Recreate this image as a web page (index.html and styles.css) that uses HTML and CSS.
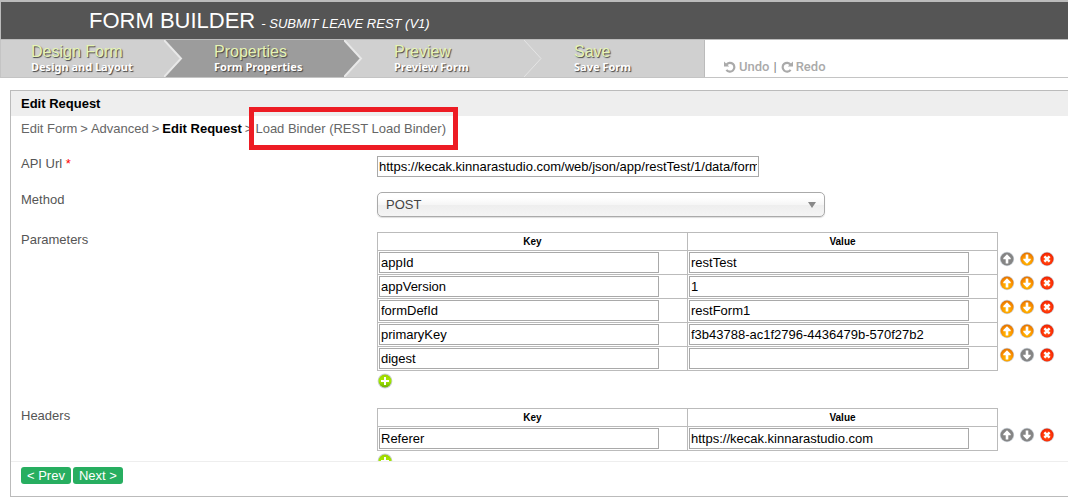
FILE: index.html
```html
<!DOCTYPE html>
<html lang="en">
<head>
<meta charset="utf-8">
<title>Form Builder - Submit Leave Rest (V1)</title>
<link rel="stylesheet" href="styles.css">
</head>
<body>
<svg class="defs" aria-hidden="true">
  <defs>
    <radialGradient id="orange" cx="50%" cy="70%" r="75%"><stop offset="0" stop-color="#ffc400"/><stop offset=".55" stop-color="#fb9200"/><stop offset="1" stop-color="#dd6a00"/></radialGradient>
    <radialGradient id="red" cx="50%" cy="55%" r="60%"><stop offset="0" stop-color="#ff7a2a"/><stop offset=".6" stop-color="#ff3408"/><stop offset="1" stop-color="#e01c00"/></radialGradient>
    <linearGradient id="green" x1="0" y1="0" x2="0" y2="1"><stop offset="0" stop-color="#9fd400"/><stop offset=".5" stop-color="#a4ea00"/><stop offset="1" stop-color="#6fae00"/></linearGradient>
    <symbol id="up" viewBox="0 0 16 16"><circle cx="8" cy="8" r="7.2" fill="#cfd6dd"/><circle cx="8" cy="8" r="6.5"/><path d="M8 3.2 4.3 7v1.2h2.4v4.3h2.6V8.2h2.4V7z" fill="#fff"/></symbol>
    <symbol id="down" viewBox="0 0 16 16"><circle cx="8" cy="8" r="7.2" fill="#cfd6dd"/><circle cx="8" cy="8" r="6.5"/><path d="M8 12.8 4.3 9V7.8h2.4V3.5h2.6v4.3h2.4V9z" fill="#fff"/></symbol>
    <symbol id="del" viewBox="0 0 16 16"><circle cx="8" cy="8" r="7.2" fill="#cfd6dd"/><circle cx="8" cy="8" r="6.5" fill="url(#red)"/><path d="M5.4 5.4l5.2 5.2M10.6 5.400l-5.2 5.2" stroke="#fff" stroke-width="2.4"/></symbol>
    <symbol id="add" viewBox="0 0 16 16"><circle cx="8" cy="8" r="7.4" fill="#ccd2d8"/><circle cx="8" cy="8" r="6.5" fill="url(#green)"/><path d="M8 4v8M4 8h8" stroke="#fff" stroke-width="2"/></symbol>
  </defs>
</svg>

<header class="top"><h1>FORM BUILDER <small>- SUBMIT LEAVE REST (V1)</small></h1></header>

<div class="toolbar">
  <nav class="steps">
    <a class="step" href="#design"><span class="name">Design Form</span><span class="desc">Design and Layout</span>
      <svg class="chevron to-dark" viewBox="0 0 19 37"><path class="next" d="M0 0H19V37H0z"/><path class="prev" d="M0 0 17 18.5 0 37z"/><path class="edge" d="M0 0 17 18.5 0 37"/></svg></a>
    <a class="step active" href="#properties"><span class="name">Properties</span><span class="desc">Form Properties</span>
      <svg class="chevron to-light" viewBox="0 0 19 37"><path class="next" d="M0 0H19V37H0z"/><path class="prev" d="M0 0 17 18.5 0 37z"/><path class="edge" d="M0 0 17 18.5 0 37"/></svg></a>
    <a class="step" href="#preview"><span class="name">Preview</span><span class="desc">Preview Form</span>
      <svg class="chevron plain" viewBox="0 0 19 37"><path class="edge" d="M0 0 17 18.5 0 37"/></svg></a>
    <a class="step last" href="#save"><span class="name">Save</span><span class="desc">Save Form</span></a>
  </nav>
  <div class="history">
    <button type="button"><svg viewBox="0 0 12 12"><path d="M2.4 3.6A4.4 4.4 0 1 1 2.4 8.8" fill="none" stroke="currentColor" stroke-width="2.2"/><path d="M0 .4V5.6H5.2z" fill="currentColor"/></svg>Undo</button>
    <span class="bar">|</span>
    <button type="button"><svg viewBox="0 0 12 12"><path d="M9.6 3.6A4.4 4.4 0 1 0 9.6 8.8" fill="none" stroke="currentColor" stroke-width="2.2"/><path d="M12 .4V5.6H6.8z" fill="currentColor"/></svg>Redo</button>
  </div>
</div>

<main class="panel">
  <h2>Edit Request</h2>
  <nav class="crumbs"><a href="#form">Edit Form</a><span>&gt;</span><a href="#advanced">Advanced</a><span>&gt;</span><strong>Edit Request</strong><span>&gt;</span><a class="marked" href="#binder">Load Binder (REST Load Binder)</a></nav>

  <form class="fields" id="fields">
    <div class="field url">
      <label for="api-url">API Url <span class="required">*</span></label>
      <div><input class="wide" id="api-url" type="text" value="https://kecak.kinnarastudio.com/web/json/app/restTest/1/data/form/restForm1"></div>
    </div>
    <div class="field method">
      <label for="method">Method</label>
      <div class="select"><select id="method"><option>POST</option><option>GET</option></select></div>
    </div>
    <div class="field">
      <span class="label" id="parameters">Parameters</span>
      <div>
        <table aria-labelledby="parameters">
          <thead><tr><th>Key</th><th>Value</th></tr></thead>
          <tbody>
            <tr><td><input type="text" aria-label="Key 1" value="appId"></td><td><input type="text" aria-label="Value 1" value="restTest"></td>
              <td class="actions"><div><button type="button" aria-label="Move up" class="off"><svg><use href="#up"/></svg></button><button type="button" aria-label="Move down"><svg><use href="#down"/></svg></button><button type="button" aria-label="Delete"><svg><use href="#del"/></svg></button></div></td></tr>
            <tr><td><input type="text" aria-label="Key 2" value="appVersion"></td><td><input type="text" aria-label="Value 2" value="1"></td>
              <td class="actions"><div><button type="button" aria-label="Move up"><svg><use href="#up"/></svg></button><button type="button" aria-label="Move down"><svg><use href="#down"/></svg></button><button type="button" aria-label="Delete"><svg><use href="#del"/></svg></button></div></td></tr>
            <tr><td><input type="text" aria-label="Key 3" value="formDefId"></td><td><input type="text" aria-label="Value 3" value="restForm1"></td>
              <td class="actions"><div><button type="button" aria-label="Move up"><svg><use href="#up"/></svg></button><button type="button" aria-label="Move down"><svg><use href="#down"/></svg></button><button type="button" aria-label="Delete"><svg><use href="#del"/></svg></button></div></td></tr>
            <tr><td><input type="text" aria-label="Key 4" value="primaryKey"></td><td><input type="text" aria-label="Value 4" value="f3b43788-ac1f2796-4436479b-570f27b2"></td>
              <td class="actions"><div><button type="button" aria-label="Move up"><svg><use href="#up"/></svg></button><button type="button" aria-label="Move down"><svg><use href="#down"/></svg></button><button type="button" aria-label="Delete"><svg><use href="#del"/></svg></button></div></td></tr>
            <tr><td><input type="text" aria-label="Key 5" value="digest"></td><td><input type="text" aria-label="Value 5" value=""></td>
              <td class="actions"><div><button type="button" aria-label="Move up"><svg><use href="#up"/></svg></button><button type="button" aria-label="Move down" class="off"><svg><use href="#down"/></svg></button><button type="button" aria-label="Delete"><svg><use href="#del"/></svg></button></div></td></tr>
          </tbody>
        </table>
        <button class="add" type="button" aria-label="Add parameter"><svg><use href="#add"/></svg></button>
      </div>
    </div>
    <div class="field">
      <span class="label" id="headers">Headers</span>
      <div>
        <table aria-labelledby="headers">
          <thead><tr><th>Key</th><th>Value</th></tr></thead>
          <tbody>
            <tr><td><input type="text" aria-label="Header key" value="Referer"></td><td><input type="text" aria-label="Header value" value="https://kecak.kinnarastudio.com"></td>
              <td class="actions"><div><button type="button" aria-label="Move up" class="off"><svg><use href="#up"/></svg></button><button type="button" aria-label="Move down" class="off"><svg><use href="#down"/></svg></button><button type="button" aria-label="Delete"><svg><use href="#del"/></svg></button></div></td></tr>
          </tbody>
        </table>
        <button class="add" type="button" aria-label="Add header"><svg><use href="#add"/></svg></button>
      </div>
    </div>
  </form>

  <footer class="pager"><button type="button">&lt; Prev</button><button type="button">Next &gt;</button></footer>
</main>
</body>
</html>
```
FILE: styles.css
```css
* { box-sizing: border-box; }

body {
  margin: 0;
  height: 100vh;
  display: flex;
  flex-direction: column;
  background: #fff;
  color: #555;
  font: 13px/16px "Liberation Sans", Arial, sans-serif;
}

a { color: inherit; text-decoration: none; }
button { border: 0; padding: 0; background: none; font: inherit; color: inherit; }
.defs { position: absolute; width: 0; height: 0; }

.top {
  border: solid #bbb;
  border-width: 2px 0 1px 1px;
  background: #555;
  color: #fff;
  padding: 6px 0 5px 88px;
}
.top h1 { margin: 0; font-size: 22px; font-weight: normal; line-height: 26px; }
.top small { font-size: 13px; font-style: italic; line-height: 16px; }

.toolbar {
  display: flex;
  border: solid #c4c4c4;
  border-width: 0 0 1px 1px;
}
.steps { display: flex; background: #d0d0d0; border-right: 1px solid #bbb; }
.step {
  display: grid;
  grid-template-columns: 1fr 19px;
  grid-template-rows: 20px 17px;
  width: 180px;
  padding-left: 31px;
  color: #fff;
  text-shadow: 1px 1px 1px #444;
}
.step:first-child { width: 182px; padding-left: 30px; }
.step.last { width: 161px; }
.step.active { background: #9c9c9c; }
.name { grid-area: 1 / 1; padding-top: 4px; color: #e6f4b4; font-size: 16px; line-height: 16px; }
.desc { grid-area: 2 / 1; font: bold 11px/14px "Noto Sans", sans-serif; white-space: nowrap; }
.chevron { grid-area: 1 / 2 / 3 / 3; width: 19px; height: 37px; }
.edge { fill: none; stroke: #e8e8e8; stroke-width: 2; }
.plain .edge { stroke: #e4e4e4; stroke-width: 1; }
.to-dark .next, .to-light .prev { fill: #9c9c9c; }
.to-dark .prev, .to-light .next { fill: #d0d0d0; }

.history {
  display: flex;
  align-items: flex-end;
  gap: 4px;
  padding: 0 0 2px 19px;
  color: #aaa;
  font: 500 13px/16px Roboto, sans-serif;
}
.history button { display: flex; align-items: center; gap: 3px; }
.history svg { width: 12px; height: 12px; }
.bar { color: #888; }

.panel {
  flex: 1;
  min-height: 0;
  display: flex;
  flex-direction: column;
  margin: 12px 0 0 10px;
  border: solid #bbb;
  border-width: 1px 0 1px 1px;
}
.panel h2 {
  margin: 0;
  padding: 5px 10px 4px;
  background: #eee;
  color: #000;
  font-size: 13px;
  line-height: 16px;
}
.crumbs { display: flex; gap: 3px; padding: 5px 10px; color: #666; }
.crumbs strong { color: #000; }
.marked { position: relative; }
.marked::after {
  content: "";
  position: absolute;
  inset: -14px -12px -13px -6px;
  border: 5px solid #ed1c24;
}

.fields { flex: 1; min-height: 0; overflow: auto; scrollbar-width: none; padding: 14px 10px 0; }
.field { display: grid; grid-template-columns: 356px 1fr; padding-bottom: 19px; }
.field.url { padding-bottom: 15px; }
.field.method { padding-bottom: 15px; }
.required { color: #f00; }

input {
  display: block;
  width: 280px;
  height: 21px;
  padding: 1px;
  border: 1px solid #a9a9a9;
  background: #fff;
  color: #000;
  font: 13px/16px "Liberation Sans", Arial, sans-serif;
}
input.wide { width: 382px; }

.select { position: relative; width: 448px; }
.select::after {
  content: "";
  position: absolute;
  right: 9px;
  top: 10px;
  border: solid transparent;
  border-width: 6px 4px 0;
  border-top-color: #888;
}
select {
  display: block;
  appearance: none;
  width: 100%;
  height: 25px;
  padding: 0 8px;
  border: 1px solid #aaa;
  border-radius: 5px;
  background: linear-gradient(#fff 20%, #f6f6f6 50%, #eee 52%, #f4f4f4 100%);
  box-shadow: 0 1px 1px #ddd;
  color: #444;
  font: 13px/22px "Liberation Sans", Arial, sans-serif;
}

table { border-collapse: collapse; }
th, td { width: 310px; padding: 1px; border: 1px solid #bbb; }
th { padding: 2px 0 1px; color: #000; font-size: 10px; line-height: 14px; }
.actions { width: auto; border: 0; padding: 0 0 0 1px; vertical-align: top; }
.actions div { display: flex; gap: 4px; }
.actions button { display: block; width: 16px; height: 16px; fill: url(#orange); }
.actions .off { fill: #858585; }
.actions svg, .add svg { display: block; width: 16px; height: 16px; }
.add { display: block; margin-top: 2px; }

.pager { display: flex; gap: 2px; padding: 5px 10px 12px; border-top: 1px solid #eee; }
.pager button {
  padding: 0 6px;
  border-radius: 3px;
  background: #27ae60;
  color: #fff;
  line-height: 17px;
}
```
